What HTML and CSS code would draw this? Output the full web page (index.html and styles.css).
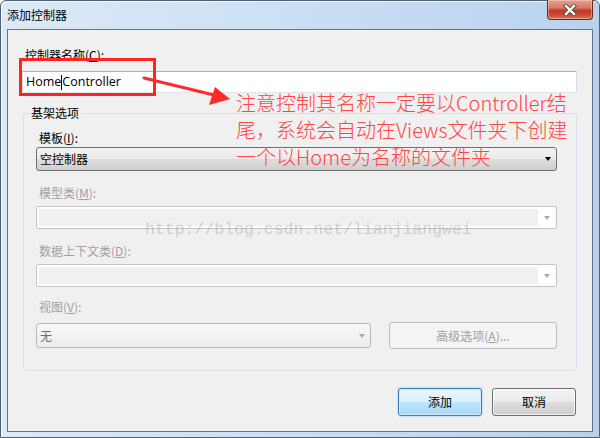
FILE: index.html
```html
<!DOCTYPE html>
<html lang="zh-CN">
<head>
<meta charset="utf-8">
<title>添加控制器</title>
<link rel="stylesheet" href="styles.css">
</head>
<body>
<div class="window">
  <div class="titlebar">
    <span class="title">添加控制器</span>
    <div class="close">
      <svg width="18" height="12" viewBox="0 0 18 12">
        <path d="M5 2 L13 10 M13 2 L5 10" stroke="#4a4a4a" stroke-width="4.2" stroke-linecap="square"/>
        <path d="M5 2 L13 10 M13 2 L5 10" stroke="#ffffff" stroke-width="2.4" stroke-linecap="square"/>
      </svg>
    </div>
  </div>
  <div class="client">
    <div class="name-field">
      <div class="label">控制器名称(<u>C</u>):</div>
      <div class="textbox">Home<span class="caret"></span>Controller</div>
    </div>
    <fieldset class="group">
      <legend class="legend">基架选项</legend>
      <div class="label">模板(<u>I</u>):</div>
      <div class="select">
        <span class="select-text">空控制器</span>
        <span class="arrow dark"></span>
      </div>
      <div class="label disabled mt14">模型类(<u>M</u>):</div>
      <div class="combo">
        <span class="combo-fill"></span>
        <span class="combo-btn"><span class="arrow light"></span></span>
      </div>
      <div class="label disabled mt14">数据上下文类(<u>D</u>):</div>
      <div class="combo">
        <span class="combo-fill"></span>
        <span class="combo-btn"><span class="arrow light"></span></span>
      </div>
      <div class="label disabled mt12">视图(<u>V</u>):</div>
      <div class="view-row">
        <div class="view-combo">
          <span class="view-text">无</span>
          <span class="arrow light"></span>
        </div>
        <div class="adv-btn">高级选项(<u>A</u>)...</div>
      </div>
    </fieldset>
    <div class="actions">
      <div class="btn primary">添加</div>
      <div class="btn">取消</div>
    </div>
  </div>

  <div class="redbox"></div>
  <svg class="arrow-note" width="600" height="438" viewBox="0 0 600 438">
    <path d="M144 78 L214 95" stroke="#ff2b2b" stroke-width="3" stroke-linecap="round"/>
    <polygon points="215,87 209,105 230,99" fill="#ff2b2b"/>
  </svg>
  <div class="note">
    <div>注意控制其名称一定要以Controller结</div>
    <div>尾，系统会自动在Views文件夹下创建</div>
    <div>一个以Home为名称的文件夹</div>
  </div>
  <div class="watermark">http://blog.csdn.net/lianjiangwei</div>
</div>
</body>
</html>
```

FILE: styles.css
```css
* { box-sizing: border-box; }
html, body { margin: 0; padding: 0; }
body {
  width: 600px;
  height: 438px;
  overflow: hidden;
  font-family: "Noto Sans CJK SC", "Noto Sans", sans-serif;
  font-size: 12px;
  color: #000;
  background: #ffffff;
}
.window {
  position: relative;
  width: 600px;
  height: 438px;
  display: flex;
  flex-direction: column;
  border: 1px solid #4f6070;
  border-radius: 6px 6px 0 0;
  background: linear-gradient(to right, #dde9f7 0%, #cde0f4 45%, #b9d2ec 100%);
  box-shadow: inset 1px 1px 0 rgba(255,255,255,0.7);
}
.titlebar {
  height: 28px;
  flex: none;
  display: flex;
  align-items: center;
  padding-left: 6px;
  position: relative;
}
.title {
  font-size: 12px;
  line-height: 16px;
  color: #000;
  margin-top: -1px;
}
.close {
  position: absolute;
  top: -1px;
  right: 6px;
  width: 46px;
  height: 20px;
  border: 1px solid #6b2a1f;
  border-top: none;
  border-radius: 0 0 4px 4px;
  background: linear-gradient(to bottom, #e8a090 0%, #d97a68 40%, #c23a26 55%, #c8452f 75%, #db7458 100%);
  box-shadow: inset 0 0 0 1px rgba(255,220,210,0.45);
  display: flex;
  align-items: center;
  justify-content: center;
}
.client {
  flex: 1;
  margin: 0 6px 5px 6px;
  border: 1px solid #64778a;
  background: #f0f0f0;
  padding: 17px 15px 0 14px;
  display: flex;
  flex-direction: column;
}
.label {
  line-height: 16px;
  height: 16px;
  margin-left: 3px;
  white-space: nowrap;
}
.label.disabled { color: #a0a0a0; }
.mt14 { margin-top: 14px; }
.mt12 { margin-top: 12px; }
.textbox {
  margin-top: 8px;
  height: 22px;
  background: #fff;
  border: 1px solid;
  border-color: #9fb4c8 #d2dde8 #dfe7ef #d2dde8;
  padding-left: 3px;
  font-family: "Open Sans", "Noto Sans", sans-serif;
  font-size: 12.5px;
  line-height: 20px;
  display: flex;
  align-items: center;
}
.caret {
  display: inline-block;
  width: 1px;
  height: 15px;
  background: #000;
}
.group {
  margin: 12px 0 0 1px;
  padding: 9px 19px 21px 12px;
  border: 1px solid #d5dfe5;
  border-radius: 3px;
  min-width: 0;
}
.legend {
  padding: 0 2px;
  margin-left: -7px;
  line-height: 16px;
}
.select {
  margin-top: 1px;
  height: 24px;
  border: 1px solid #707070;
  border-radius: 3px;
  background: linear-gradient(to bottom, #f2f2f2 0%, #ebebeb 50%, #dddddd 50%, #cfcfcf 100%);
  display: flex;
  align-items: center;
  justify-content: space-between;
  padding: 0 5px 0 3px;
}
.select-text { line-height: 16px; }
.arrow {
  width: 0;
  height: 0;
  border-left: 3.5px solid transparent;
  border-right: 3.5px solid transparent;
  border-top: 4px solid #000;
}
.arrow.light { border-top-color: #a9a9a9; }
.combo {
  margin-top: 5px;
  height: 23px;
  border: 1px solid #c4c4c4;
  border-radius: 2px;
  background: #fff;
  padding: 2px 0 2px 2px;
  display: flex;
}
.combo-fill {
  flex: 1;
  background: #f0f0f0;
}
.combo-btn {
  width: 18px;
  display: flex;
  align-items: center;
  justify-content: center;
}
.view-row {
  margin-top: 7px;
  display: flex;
  align-items: flex-start;
  gap: 18px;
}
.view-combo {
  width: 335px;
  height: 25px;
  margin-top: 1px;
  border: 1px solid #b8b8b8;
  border-radius: 3px;
  background: linear-gradient(to bottom, #f7f7f7 0%, #f2f2f2 50%, #ececec 100%);
  display: flex;
  align-items: center;
  justify-content: space-between;
  padding: 0 5px 0 3px;
}
.view-text { color: #6d6d6d; line-height: 16px; }
.adv-btn {
  flex: 1;
  height: 27px;
  border: 1px solid #bcbcbc;
  border-radius: 3px;
  background: #f4f4f4;
  color: #a0a0a0;
  display: flex;
  align-items: center;
  justify-content: center;
  line-height: 16px;
}
.actions {
  margin-top: 17px;
  display: flex;
  justify-content: flex-end;
  gap: 10px;
  margin-right: 1px;
}
.btn {
  width: 84px;
  height: 28px;
  border: 1px solid #707070;
  border-radius: 3px;
  background: linear-gradient(to bottom, #f2f2f2 0%, #ebebeb 50%, #dddddd 50%, #cfcfcf 100%);
  box-shadow: inset 0 0 0 1px rgba(255,255,255,0.7);
  display: flex;
  align-items: center;
  justify-content: center;
  line-height: 16px;
}
.btn.primary {
  border-color: #3c7fb1;
  background: linear-gradient(to bottom, #eaf6fd 0%, #d9f0fc 50%, #bee6fd 50%, #a7d9f5 100%);
  box-shadow: inset 0 0 0 1px #cdebfb, 0 0 2px #67c3ee;
}
.redbox {
  position: absolute;
  left: 18px;
  top: 57px;
  width: 137px;
  height: 38px;
  border: 3px solid #ff2424;
  pointer-events: none;
}
.arrow-note {
  position: absolute;
  left: -1px;
  top: -1px;
  pointer-events: none;
}
.note {
  position: absolute;
  left: 235px;
  top: 88px;
  font-family: "Noto Sans CJK SC", "Noto Sans", sans-serif;
  font-size: 20px;
  font-weight: 300;
  line-height: 27px;
  color: #ff4545;
  white-space: nowrap;
  pointer-events: none;
}
.watermark {
  position: absolute;
  left: 144px;
  top: 219px;
  font-family: "Liberation Mono", monospace;
  font-size: 16.5px;
  line-height: 20px;
  color: rgba(150,150,150,0.4);
  white-space: nowrap;
  pointer-events: none;
}
```
